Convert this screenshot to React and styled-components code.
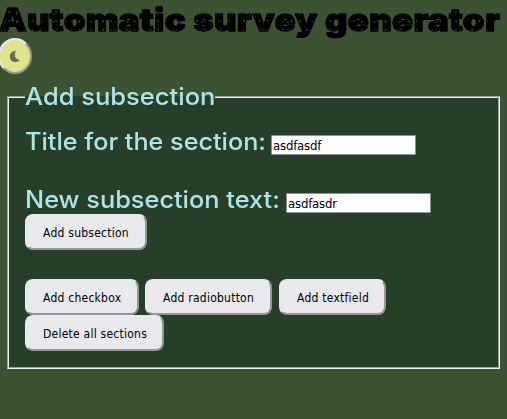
import React from "react";
import styled, { createGlobalStyle } from "styled-components";

const Global = createGlobalStyle`
  * { box-sizing: border-box; }
  html, body { margin: 0; min-height: 100%; background: #3d5233; }
  body { overflow: hidden; }
`;

const Page = styled.main`
  height: 419px;
  background: #3d5233;
  font-family: Inter, sans-serif;
`;

const Title = styled.h1`
  width: max-content;
  margin: 0 0 0 -1px;
  height: 38px;
  padding-top: 1px;
  font: 900 31px/38px Inter, sans-serif;
  letter-spacing: 0.3px;
  white-space: nowrap;
  transform: scaleX(1.12);
  transform-origin: left;
  color: transparent;
  -webkit-text-stroke: 1px #000000e0;
  background-color: #000;
  background-image:
    radial-gradient(circle at 2px 3px, #34462c 0.7px, transparent 1px),
    radial-gradient(circle at 5px 6px, #27351f 0.6px, transparent 1px);
  background-size: 7px 9px, 11px 8px;
  background-clip: text;
  -webkit-background-clip: text;
`;

const ThemeButton = styled.button`
  display: flex;
  align-items: center;
  justify-content: center;
  width: 34px;
  height: 36px;
  margin: 0 0 0 -2px;
  padding: 0;
  border: 2px solid;
  border-color: #e9e9ed #979797 #979797 #e9e9ed;
  border-radius: 50%;
  background: #dfe38e;
`;

const Section = styled.fieldset`
  width: 493px;
  height: 287px;
  margin: 8px 0 0 7px;
  padding: 0 16px;
  border: 2px groove #f0f0f0;
  background: #273f28;
`;

const Legend = styled.legend`
  width: 190px;
  height: 30px;
  padding: 0;
  font-size: 24px;
  font-weight: 500;
  line-height: 30px;
  white-space: nowrap;
  color: #ace5e6;
`;

const Row = styled.div`
  display: flex;
  align-items: center;
  height: 30px;
  margin-top: ${(p) => p.$top};
`;

const Label = styled.label`
  width: ${(p) => p.$width};
  font-size: 24px;
  font-weight: 500;
  line-height: 30px;
  white-space: nowrap;
  color: #ace5e6;
`;

const WideText = styled.span`
  display: inline-block;
  transform: scaleX(${(p) => p.$scale});
  transform-origin: left;
`;

const Field = styled.input`
  width: 145px;
  height: 20px;
  margin: 5px 0 0;
  padding: 1px 1px 0;
  border: 1px solid #8f8f9d;
  border-radius: 1px;
  background: #fff;
  color: #000;
  font: 13px "DejaVu Sans Condensed", "DejaVu Sans", sans-serif;
  font-stretch: condensed;
  letter-spacing: -0.18px;
  outline: none;
`;

const Actions = styled.div`
  display: flex;
  flex-wrap: wrap;
  column-gap: 6px;
  margin-top: ${(p) => p.$top};
`;

const Button = styled.button`
  width: ${(p) => p.$width};
  height: 36px;
  margin-right: ${(p) => p.$after || "0"};
  padding: 2px 0 0 16px;
  border: 2px solid;
  border-color: #e9e9ed #979797 #979797 #e9e9ed;
  border-radius: 8px;
  background: #e9e9ed;
  color: #000;
  font: 12px "DejaVu Sans Condensed", "DejaVu Sans", sans-serif;
  font-stretch: condensed;
  letter-spacing: 0.24px;
  text-align: left;
  white-space: nowrap;
`;

export default function App() {
  return (
    <Page>
      <Global />
      <Title>Automatic survey generator</Title>
      <ThemeButton aria-label="Toggle theme">
        <svg width="12" height="13" viewBox="0 0 12 13">
          <path d="M6.1.8C2.8 1.3.9 3.5.9 6.4c0 3.3 2.2 5.7 5.4 5.7 2.1 0 3.9-.9 5-2.5C8.600 10.100 6.300 8.600 6 5.800 5.800 3.500 6.100 1.800 7 .9Z" fill="#666e55" />
        </svg>
      </ThemeButton>
      <Section>
        <Legend><WideText $scale={1.063}>Add subsection</WideText></Legend>
        <Row $top="15px">
          <Label htmlFor="title" $width="246px"><WideText $scale={1.05}>Title for the section:</WideText></Label>
          <Field id="title" defaultValue="asdfasdf" />
        </Row>
        <Row $top="28px">
          <Label htmlFor="text" $width="261px"><WideText $scale={1.055}>New subsection text:</WideText></Label>
          <Field id="text" defaultValue="asdfasdr" />
        </Row>
        <Actions $top="-1px">
          <Button $width="122px">Add subsection</Button>
        </Actions>
        <Actions $top="29px">
          <Button $width="114px">Add checkbox</Button>
          <Button $width="127px" $after="1px">Add radiobutton</Button>
          <Button $width="107px">Add textfield</Button>
          <Button $width="139px">Delete all sections</Button>
        </Actions>
      </Section>
    </Page>
  );
}
